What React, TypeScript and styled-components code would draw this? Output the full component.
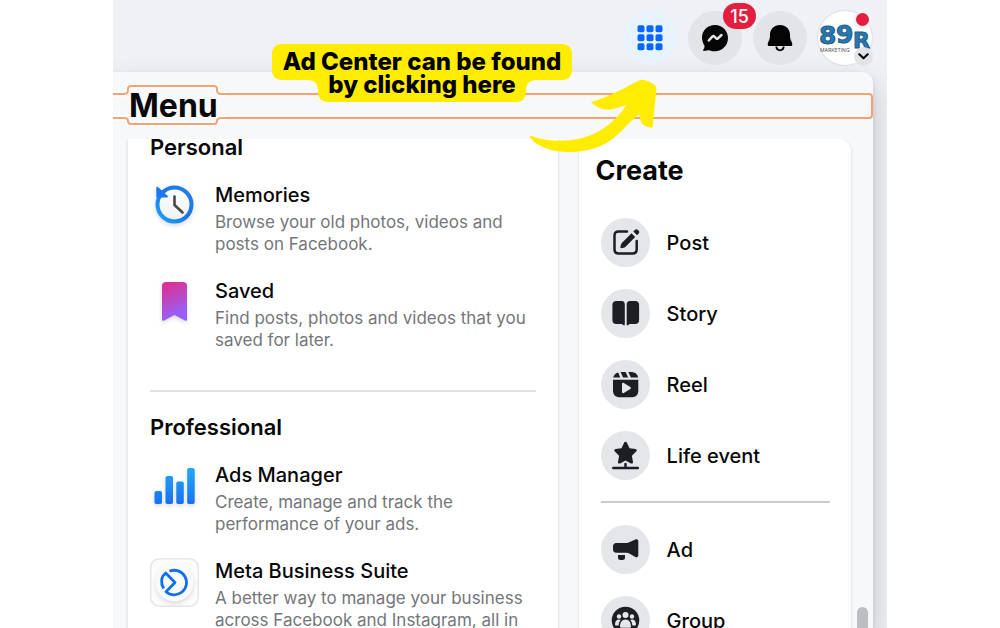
import React from "react";
import styled, { createGlobalStyle, css } from "styled-components";

const GlobalStyle = createGlobalStyle`
  *, *::before, *::after { box-sizing: border-box; }
  body {
    margin: 0;
    background: #fff;
    color: #080809;
    font-family: Inter, "Liberation Sans", sans-serif;
    overflow: hidden;
  }
  h1, h2, h3, p, ul { margin: 0; padding: 0; }
  ul { list-style: none; }
  button { font: inherit; color: inherit; border: 0; padding: 0; background: none; cursor: pointer; }
  svg { display: block; }
`;

const Page = styled.div`
  position: relative;
  height: 100vh;
  padding: 0 113px;
  overflow: hidden;
`;

const Shell = styled.div`
  display: flex;
  flex-direction: column;
  height: 100%;
  padding-right: 14px;
  background: #f0f1f5;
  overflow: hidden;
`;

const TopBar = styled.header`
  display: flex;
  justify-content: flex-end;
  gap: 11px;
  padding: 11px 1px 7px 0;
`;

const RoundButton = styled.button<{ $active?: boolean }>`
  position: relative;
  display: grid;
  place-items: center;
  width: 54px;
  height: 54px;
  border-radius: 50%;
  background: ${(p) => (p.$active ? "#e7f3ff" : "#e2e4e8")};
`;

const Badge = styled.span`
  position: absolute;
  top: -8px;
  right: -14px;
  width: 33px;
  height: 26px;
  border-radius: 13px;
  background: #e41e3f;
  color: #fff;
  font-size: 18px;
  font-weight: 500;
  line-height: 27px;
  text-align: center;
`;

const AvatarButton = styled(RoundButton)`
  background: #fff;
  box-shadow: 0 0 2px rgba(0, 0, 0, 0.2);
`;

const StatusDot = styled.span`
  position: absolute;
  top: -1px;
  right: 0;
  width: 19px;
  height: 19px;
  border: 3px solid #f3f3f6;
  border-radius: 50%;
  background: #e41e3f;
`;

const Caret = styled.span`
  position: absolute;
  right: -1px;
  bottom: -1px;
  display: grid;
  place-items: center;
  width: 19px;
  height: 19px;
  border-radius: 50%;
  background: #e2e4e8;
`;

const Panel = styled.main`
  flex: 1;
  display: flex;
  flex-direction: column;
  min-height: 0;
  border-radius: 0 11px 0 0;
  background: #f7f8fa;
  box-shadow: 0 12px 28px rgba(0, 0, 0, 0.2), 0 2px 4px rgba(0, 0, 0, 0.1);
`;

const TitleRow = styled.div`
  position: relative;
  flex: none;
  height: 67px;
  padding: 14px 16px;
`;

const Title = styled.h1`
  position: relative;
  font-size: 32px;
  font-weight: 700;
  line-height: 40px;
`;

const Outline = styled.div`
  position: absolute;
  inset: 12px 0 auto;
  display: flex;
`;

const OutlineTail = styled.div`
  flex: 1;
  height: 26px;
  margin-top: 9px;
  border: 2px solid #f2a273;
  border-left: 0;
  border-radius: 0 4px 4px 0;
`;

const Body = styled.div`
  flex: 1;
  display: flex;
  gap: 6px;
  min-height: 0;
  padding: 0 5px 0 15px;
`;

const Columns = styled.div`
  flex: 1;
  display: grid;
  grid-template-columns: minmax(0, 429fr) minmax(0, 272fr);
  column-gap: 21px;
  min-height: 0;
`;

const card = css`
  background: #fff;
  box-shadow: 0 1px 3px rgba(0, 0, 0, 0.16);
  clip-path: inset(0 -4px);
`;

const AppsCard = styled.section`
  ${card}
  padding: 0 22px;
  overflow: hidden;
`;

const AppsScroll = styled.div`
  margin-top: -6px;
`;

const SectionTitle = styled.h2`
  font-size: 22px;
  font-weight: 600;
  line-height: 28px;
`;

const AppList = styled.ul`
  display: grid;
  gap: 23px;
  padding-top: 21px;
`;

const AppItem = styled.li`
  display: grid;
  grid-template-columns: 49px 1fr;
  column-gap: 16px;
`;

const AppName = styled.h3`
  margin-bottom: 3px;
  font-size: 20px;
  font-weight: 500;
  line-height: 26px;
`;

const AppText = styled.p`
  color: #74767a;
  font-size: 17px;
  font-optical-sizing: none;
  line-height: 22px;
  white-space: nowrap;
`;

const Divider = styled.hr<{ $space: string; $color: string }>`
  height: 2px;
  margin: ${(p) => p.$space};
  border: 0;
  background: ${(p) => p.$color};
`;

const CreateCard = styled.aside`
  ${card}
  padding: 16px 21px 0 17px;
  border-radius: 12px 12px 0 0;
`;

const CreateTitle = styled.h2`
  margin-bottom: 31px;
  font-size: 27px;
  font-weight: 700;
  line-height: 32px;
`;

const CreateGroup = styled.div`
  display: grid;
  gap: 22px;
  padding-left: 5px;
`;

const CreateButton = styled.button`
  display: flex;
  align-items: center;
  gap: 17px;
  font-size: 20px;
  font-weight: 500;
  line-height: 26px;
  text-align: left;
`;

const IconDisc = styled.span`
  width: 49px;
  height: 49px;
  border-radius: 50%;
  background: #e4e6ea;
  color: #1c1e21;
`;

const ScrollTrack = styled.div`
  display: flex;
  align-items: flex-end;
`;

const ScrollThumb = styled.div`
  width: 11px;
  height: 21px;
  border-radius: 6px 6px 0 0;
  background: #bcbec2;
`;

const Callout = styled.div`
  position: absolute;
  top: 44px;
  left: 272px;
  display: flex;
  flex-direction: column;
  align-items: center;
  color: #000;
  font-size: 24px;
  font-weight: 800;
  line-height: 23px;
  text-align: center;
  white-space: nowrap;
`;

const CalloutTop = styled.span`
  width: 300px;
  padding: 6px 0 7px;
  border-radius: 9px;
  background: #ffec00;
`;

const CalloutBottom = styled.span`
  position: relative;
  width: 208px;
  margin-top: -7px;
  padding-bottom: 6px;
  border-radius: 0 0 9px 9px;
  background: #ffec00;

  &::before,
  &::after {
    content: "";
    position: absolute;
    top: 7px;
    width: 8px;
    height: 8px;
  }
  &::before {
    right: 100%;
    background: radial-gradient(circle at 0 100%, transparent 7px, #ffec00 8px);
  }
  &::after {
    left: 100%;
    background: radial-gradient(circle at 100% 100%, transparent 7px, #ffec00 8px);
  }
`;

const Arrow = styled.svg`
  position: absolute;
  top: 79px;
  left: 530px;
`;

const GridIcon = () => (
  <svg width="26" height="26" viewBox="0 0 26 26" fill="#0866ff" aria-hidden="true">
    {[0, 9, 18].map((y) =>
      [0, 9, 18].map((x) => <rect key={`${x}-${y}`} x={x + 0.5} y={y + 0.3} width="7" height="7" rx="1.8" />)
    )}
  </svg>
);

const MessengerIcon = () => (
  <svg width="28" height="28" viewBox="0 0 28 28" aria-hidden="true">
    <path
      d="M14 1C6.700 1 1 6.400 1 13.600c0 3.300 1.200 6.100 2.300 8 .4.700.3 1.500-.1 2.300l-1 1.800c-.4.700.1 1.300.8 1.200l4.500-.6c.5-.1.900 0 1.300.1 1.600.6 3.300.8 5.200.8 7.300 0 13-5.900 13-13.200S21.300 1 14 1Z"
      fill="#050505"
    />
    <path d="M7.800 16.500l3.700-4.100c.5-.5 1.100-.5 1.600-.1l2.200 2.100c.5.4 1.100.4 1.600 0l3.600-3.400" fill="none" stroke="#e2e4e8" strokeWidth="2.500" strokeLinecap="round" strokeLinejoin="round" />
  </svg>
);

const BellIcon = () => (
  <svg width="26" height="28" viewBox="0 0 26 28" aria-hidden="true">
    <path
      d="M13 1C7 1 3 5.400 3 10.800c0 3-.4 4.800-1.400 6.500C1 18.500.6 19.500.7 20.700c0 .8.6 1.300 1.300 1.300h22c.7 0 1.300-.5 1.300-1.300 0-1.200-.3-2.200-.9-3.400-1-1.700-1.400-3.500-1.400-6.500C23 5.400 19 1 13 1Z"
      fill="#050505"
    />
    <path d="M9.300 22.500c.3 2.500 1.700 3.700 3.700 3.700s3.400-1.200 3.700-3.700" fill="none" stroke="#050505" strokeWidth="2" />
  </svg>
);

const AvatarLogo = () => (
  <svg width="54" height="54" viewBox="0 0 54 54" aria-hidden="true">
    <g fill="#2b78ad" stroke="#1c5c8c" strokeWidth="1" fontFamily="DejaVu Sans" fontWeight="700">
      <text x="1" y="33" fontSize="25">8</text>
      <text x="18" y="32" fontSize="25">9</text>
      <text x="35" y="37" fontSize="22">R</text>
    </g>
    <text x="2" y="41" fontSize="5" fontFamily="Inter" fill="#555">MARKETING</text>
  </svg>
);

const MemoriesIcon = () => (
  <svg width="49" height="49" viewBox="0 0 49 49" aria-hidden="true">
    <defs>
      <linearGradient id="mem" x1="0" y1="1" x2="1" y2="0">
        <stop offset="0" stopColor="#1ca5fb" />
        <stop offset="0.5" stopColor="#1877e8" />
        <stop offset="1" stopColor="#2480e6" />
      </linearGradient>
      <linearGradient id="face" x1="0" y1="0" x2="0" y2="1">
        <stop offset="0" stopColor="#fff" />
        <stop offset="1" stopColor="#eef0f3" />
      </linearGradient>
    </defs>
    <g filter="drop-shadow(0 2px 2px rgba(0,0,0,0.15))">
      <circle cx="24.500" cy="22.500" r="17" fill="url(#face)" stroke="url(#mem)" strokeWidth="4" />
      <path d="M6.300 5.800c0-.9 1-1.300 1.700-.7l9.600 8.700c.6.600.2 1.600-.6 1.600H7.300c-.6 0-1-.4-1-1Z" fill="#1b78ec" />
    </g>
    <path d="M24.500 14.500v8.500l8 7.500" fill="none" stroke="#45484c" strokeWidth="2.600" strokeLinecap="round" strokeLinejoin="round" />
  </svg>
);

const SavedIcon = () => (
  <svg width="49" height="49" viewBox="0 0 49 49" aria-hidden="true">
    <defs>
      <linearGradient id="saved" x1="0.300" y1="0" x2="0.600" y2="1">
        <stop offset="0" stopColor="#dc2f96" />
        <stop offset="0.500" stopColor="#b44cc9" />
        <stop offset="0.800" stopColor="#9a5cf4" />
        <stop offset="1" stopColor="#9a60fa" />
      </linearGradient>
    </defs>
    <path
      d="M16 4h17c2.500 0 4 1.500 4 4v33.500c0 1.300-1.200 1.700-2.200 1L24.500 37l-10.300 5.500c-1 .7-2.200.3-2.200-1V8c0-2.500 1.500-4 4-4Z"
      fill="url(#saved)"
      filter="drop-shadow(0 2px 2px rgba(0,0,0,0.15))"
    />
  </svg>
);

const AdsIcon = () => (
  <svg width="49" height="49" viewBox="0 0 49 49" aria-hidden="true">
    <defs>
      <linearGradient id="ads" gradientUnits="userSpaceOnUse" x1="0" y1="6" x2="0" y2="42">
        <stop offset="0" stopColor="#22aaf8" />
        <stop offset="1" stopColor="#1771f0" />
      </linearGradient>
    </defs>
    <g fill="url(#ads)" filter="drop-shadow(0 2px 2px rgba(0,0,0,0.15))">
      <rect x="4.500" y="29" width="7.500" height="13" rx="1.800" />
      <rect x="15.500" y="14" width="7.500" height="28" rx="1.800" />
      <rect x="26.300" y="19.500" width="7.500" height="22.500" rx="1.800" />
      <rect x="37.200" y="6" width="7.500" height="36" rx="1.800" />
    </g>
  </svg>
);

const BusinessIcon = () => (
  <svg width="49" height="49" viewBox="0 0 49 49" aria-hidden="true">
    <rect x="0.700" y="0.700" width="47.600" height="47.600" rx="9" fill="#fcfcfc" stroke="#e4e5e7" strokeWidth="1.400" />
    <circle cx="24.500" cy="24.500" r="19" fill="#fafafb" filter="drop-shadow(0 2px 2px rgba(0,0,0,0.14))" />
    <g fill="none" stroke="#0f6ff0" strokeWidth="2.800" strokeLinejoin="round">
      <path d="M19.500 13.200A12.300 12.300 0 1 1 16 33.700l9-9.200-9.300-9.500c-4.600 3.600-5.500 10-2 15.500" />
    </g>
  </svg>
);

const PostIcon = () => (
  <svg width="49" height="49" viewBox="0 0 49 49" fill="none" stroke="currentColor" aria-hidden="true">
    <path d="M26 13.400h-8.200c-2.900 0-4.300 1.400-4.300 4.300v13.600c0 2.900 1.400 4.300 4.300 4.300h13.600c2.900 0 4.300-1.400 4.300-4.300V23" strokeWidth="2.500" strokeLinecap="round" />
    <path d="M30.500 15.300l3.700 3.700-9.600 9.700c-.6.600-1.200.9-2 1l-2.300.5c-.6.100-1-.4-.9-.9l.4-2.300c.2-.8.500-1.400 1-2Z" fill="currentColor" stroke="none" />
    <path d="M32.300 13.500l1.500-1.500c1-1 2.200-1 3.100 0l.6.600c1 1 1 2.200 0 3.100L36 17.200Z" fill="currentColor" stroke="none" />
  </svg>
);

const StoryIcon = () => (
  <svg width="49" height="49" viewBox="0 0 49 49" fill="currentColor" aria-hidden="true">
    <path d="M15.500 12h5.200c2.100 0 3.100 1.300 3.100 3.200v20.300c0 1-.8 1.300-1.500.6-.6-.7-1.400-1.200-2.600-1.200h-4.300c-2.700 0-4-1.500-4-4V16c0-2.600 1.400-4 4.100-4Z" />
    <path d="M34 12h-5.200c-2.100 0-3.100 1.300-3.100 3.200v20.300c0 1 .8 1.300 1.500.6.600-.7 1.400-1.200 2.600-1.200h4.300c2.700 0 4-1.500 4-4V16c0-2.600-1.400-4-4.100-4Z" />
  </svg>
);

const ReelIcon = () => (
  <svg width="49" height="49" viewBox="0 0 49 49" fill="currentColor" aria-hidden="true">
    <path d="M12 19.700h25.300v10.600c0 4.800-2.200 7-7 7H19c-4.800 0-7-2.200-7-7Z" />
    <path d="M12.200 17.600c.5-2.500 1.900-4.500 5-5.200l2 5.200Z" />
    <path d="M19.600 12h5l2.600 5.600h-5.200ZM27.300 12h3.400c3.500.4 5.800 2 6.500 5.600h-7.400Z" />
    <path d="M21 24c0-1 1-1.500 1.800-1l6.500 4c.8.500.8 1.500 0 2l-6.500 4c-.8.500-1.800 0-1.800-1Z" fill="#e4e6ea" />
  </svg>
);

const LifeIcon = () => (
  <svg width="49" height="49" viewBox="0 0 49 49" fill="currentColor" aria-hidden="true">
    <path d="M23.200 11.600c.6-1.200 2-1.200 2.600 0l2.700 5.600 5.900.8c1.300.2 1.700 1.600.8 2.500l-4.300 4.200 1.100 6.200c.2 1.300-1 2.100-2.100 1.500l-5.400-2.900-5.400 2.900c-1.100.6-2.300-.2-2.100-1.500l1.100-6.200-4.300-4.200c-.9-.9-.5-2.300.8-2.500l5.900-.8Z" />
    <path d="M12.300 37H36.800M24.500 33v4" stroke="currentColor" strokeWidth="2.500" strokeLinecap="round" />
  </svg>
);

const AdIcon = () => (
  <svg width="49" height="49" viewBox="0 0 49 49" fill="currentColor" aria-hidden="true">
    <path d="M15.500 18h9.300c1.500 0 2.700-.3 4-1.100l5.500-2.400c1.600-.7 3 .1 3 1.800v14c0 1.700-1.400 2.500-3 1.700l-5.500-3.200c-1.300-.8-2.500-1.100-4-1.100h-9.300c-2.400 0-3.500-1.200-3.500-3.500V21.500c0-2.300 1.100-3.500 3.500-3.500Z" />
    <path d="M17 30h7v2.500c0 1.700-.9 2.500-2.500 2.500h-2c-1.600 0-2.500-.8-2.500-2.500Z" />
  </svg>
);

const GroupIcon = () => (
  <svg width="49" height="49" viewBox="0 0 49 49" aria-hidden="true">
    <circle cx="24.500" cy="24.500" r="13.800" fill="currentColor" />
    <g fill="#e4e6ea">
      <circle cx="24.500" cy="19" r="3" />
      <circle cx="18" cy="20.500" r="2.200" />
      <circle cx="31" cy="20.500" r="2.200" />
      <path d="M19 30.500c0-4 2-7 5.500-7s5.500 3 5.500 7c0 .8-.5 1.200-1.200 1.200h-8.600c-.7 0-1.200-.4-1.200-1.200Z" />
      <path d="M17.700 29.500h-2.400c-.8 0-1.300-.5-1.300-1.300.1-2.600 1.600-4.700 4-4.700.7 0 1.200.2 1.700.5-1.300 1.400-2 3.300-2 5.500ZM31.300 29.500h2.400c.8 0 1.300-.5 1.300-1.300-.1-2.600-1.600-4.700-4-4.700-.7 0-1.200.2-1.700.5 1.300 1.400 2 3.300 2 5.500Z" />
    </g>
  </svg>
);

type App = { name: string; lines: [string, string]; Icon: React.FC };

const personalApps: App[] = [
  { name: "Memories", lines: ["Browse your old photos, videos and", "posts on Facebook."], Icon: MemoriesIcon },
  { name: "Saved", lines: ["Find posts, photos and videos that you", "saved for later."], Icon: SavedIcon },
];

const professionalApps: App[] = [
  { name: "Ads Manager", lines: ["Create, manage and track the", "performance of your ads."], Icon: AdsIcon },
  {
    name: "Meta Business Suite",
    lines: ["A better way to manage your business", "across Facebook and Instagram, all in"],
    Icon: BusinessIcon,
  },
];

const primaryActions = [
  { label: "Post", Icon: PostIcon },
  { label: "Story", Icon: StoryIcon },
  { label: "Reel", Icon: ReelIcon },
  { label: "Life event", Icon: LifeIcon },
];

const secondaryActions = [
  { label: "Ad", Icon: AdIcon },
  { label: "Group", Icon: GroupIcon },
];

const Apps = ({ items }: { items: App[] }) => (
  <AppList>
    {items.map(({ name, lines, Icon }) => (
      <AppItem key={name}>
        <Icon />
        <div>
          <AppName>{name}</AppName>
          <AppText>
            {lines[0]}
            <br />
            {lines[1]}
          </AppText>
        </div>
      </AppItem>
    ))}
  </AppList>
);

const Actions = ({ items }: { items: { label: string; Icon: React.FC }[] }) => (
  <CreateGroup>
    {items.map(({ label, Icon }) => (
      <CreateButton key={label} type="button">
        <IconDisc>
          <Icon />
        </IconDisc>
        {label}
      </CreateButton>
    ))}
  </CreateGroup>
);

export default function App() {
  return (
    <Page>
      <GlobalStyle />
      <Shell>
        <TopBar>
          <RoundButton type="button" $active aria-label="Menu">
            <GridIcon />
          </RoundButton>
          <RoundButton type="button" aria-label="Messenger">
            <MessengerIcon />
            <Badge>15</Badge>
          </RoundButton>
          <RoundButton type="button" aria-label="Notifications">
            <BellIcon />
          </RoundButton>
          <AvatarButton type="button" aria-label="Your profile">
            <AvatarLogo />
            <StatusDot />
            <Caret>
              <svg width="11" height="7" viewBox="0 0 11 7" fill="none" stroke="#080809" strokeWidth="2.200" strokeLinecap="round" strokeLinejoin="round" aria-hidden="true">
                <path d="M1.300 1.300l4.200 4 4.200-4" />
              </svg>
            </Caret>
          </AvatarButton>
        </TopBar>
        <Panel>
          <TitleRow>
            <Outline>
              <svg width="114" height="42" viewBox="0 0 114 42" fill="none" aria-hidden="true">
                <g stroke="#fff" strokeWidth="5">
                  <path d="M0 10h11c3 0 4-1 4-4V5c0-2 1-3 3-3h83c2 0 3 1 3 3v1c0 3 1 4 4 4h6" />
                  <path d="M0 34h11c3 0 4 1 4 3s1 3 3 3h83c2 0 3-1 3-3s1-3 4-3h6" />
                </g>
                <g stroke="#f2a273" strokeWidth="2">
                  <path d="M0 10h11c3 0 4-1 4-4V5c0-2 1-3 3-3h83c2 0 3 1 3 3v1c0 3 1 4 4 4h6" />
                  <path d="M0 34h11c3 0 4 1 4 3s1 3 3 3h83c2 0 3-1 3-3s1-3 4-3h6" />
                </g>
              </svg>
              <OutlineTail />
            </Outline>
            <Title>Menu</Title>
          </TitleRow>
          <Body>
            <Columns>
              <AppsCard>
                <AppsScroll>
                  <SectionTitle>Personal</SectionTitle>
                  <Apps items={personalApps} />
                  <Divider $space="39px 0 21px" $color="#e0e2e4" />
                  <SectionTitle>Professional</SectionTitle>
                  <Apps items={professionalApps} />
                </AppsScroll>
              </AppsCard>
              <CreateCard>
                <CreateTitle>Create</CreateTitle>
                <Actions items={primaryActions} />
                <Divider $space="21px 0 22px 5px" $color="#cbcccf" />
                <Actions items={secondaryActions} />
              </CreateCard>
            </Columns>
            <ScrollTrack>
              <ScrollThumb />
            </ScrollTrack>
          </Body>
        </Panel>
      </Shell>
      <Callout>
        <CalloutTop>Ad Center can be found</CalloutTop>
        <CalloutBottom>by clicking here</CalloutBottom>
      </Callout>
      <Arrow width="127" height="74" viewBox="60 58 381 222" aria-hidden="true">
        <path
          d="M60 228C58 234 70 246 85 255C120 275 160 278 190 277C255 274 297 250 325 223C350 198 372 175 388 163C390 178 392 188 398 194C405 201 420 206 428 203L439 90C440 80 435 75 425 70C412 62 400 58 390 61C350 80 300 112 243 127C255 140 275 151 295 150C315 148 330 142 349 136C330 165 300 200 250 223C200 247 120 250 62 228Z"
          fill="#ffec00"
        />
      </Arrow>
    </Page>
  );
}
